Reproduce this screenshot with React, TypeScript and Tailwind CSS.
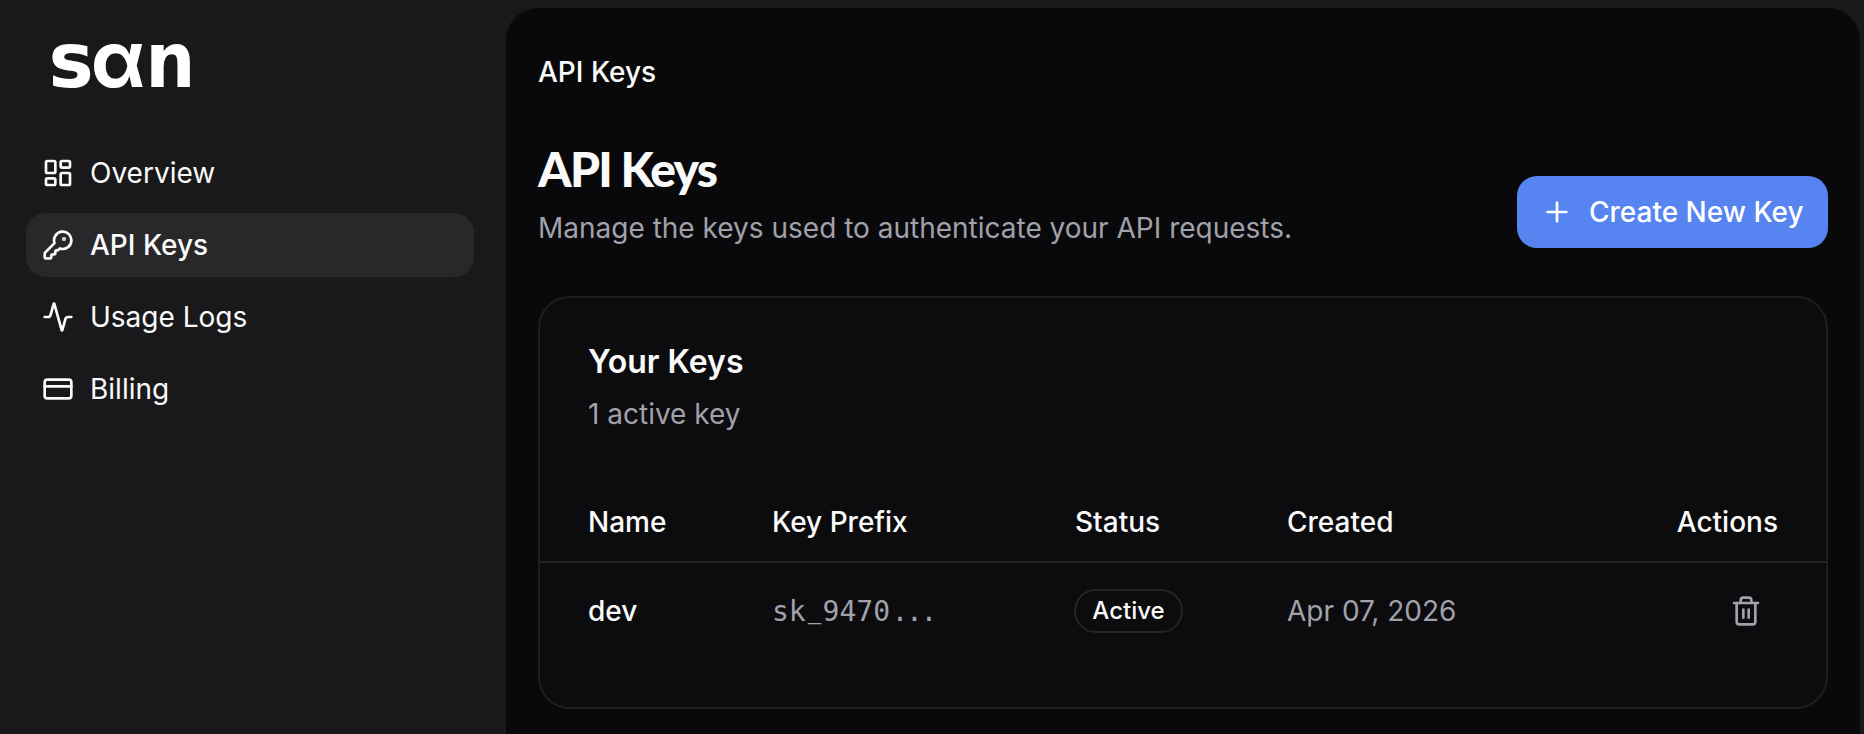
import { Activity, CreditCard, KeyRound, LayoutDashboard, Plus, Trash2 } from "lucide-react";

const navItems = [
  { label: "Overview", icon: LayoutDashboard },
  { label: "API Keys", icon: KeyRound, active: true },
  { label: "Usage Logs", icon: Activity },
  { label: "Billing", icon: CreditCard },
];

const keys = [{ name: "dev", prefix: "9470", status: "Active", created: "Apr 07, 2026" }];

function Logo() {
  return (
    <div className="flex pl-[26px] font-['DejaVu_Sans',sans-serif] text-[76px] leading-[112px] font-bold text-white">
      <span className="flex w-[38px] translate-y-px justify-center">s</span>
      <span className="ml-px flex w-[54px] -translate-y-px justify-center font-['Inter',sans-serif] text-[78px]">α</span>
      <span className="ml-1.5 flex w-[39px] translate-y-px scale-x-[0.92] justify-center">n</span>
    </div>
  );
}

function Sidebar() {
  return (
    <aside className="w-[506px] shrink-0 pr-8 pl-[26px]">
      <div className="h-[141px] pt-1">
        <Logo />
      </div>
      <nav aria-label="Main navigation" className="flex flex-col gap-2">
        {navItems.map(({ label, icon: Icon, active }) => (
          <a
            key={label}
            href="#"
            className={`flex h-16 items-center gap-4 rounded-[20px] px-4 text-[28px] ${
              active ? "bg-[#28282a] font-medium" : ""
            }`}
          >
            <Icon size={32} />
            <span>{label}</span>
          </a>
        ))}
      </nav>
    </aside>
  );
}

function KeysTable() {
  return (
    <div className="mt-12">
      {/* Table head */}
      <div className="grid h-[81px] grid-cols-[184px_303px_212px_1fr] items-center border-b-2 border-[#252527] px-12 font-medium">
        <span>Name</span>
        <span>Key Prefix</span>
        <span>Status</span>
        <span className="flex justify-between">
          <span>Created</span>
          <span>Actions</span>
        </span>
      </div>

      {keys.map((k) => (
        <div key={k.name} className="grid h-24 grid-cols-[184px_303px_212px_1fr] items-center px-12">
          <span className="font-medium">{k.name}</span>
          <span className="pt-px font-['DejaVu_Sans_Mono',monospace] text-[28px] text-[#a1a1aa]">
            sk
            <span className="inline-block -translate-y-1 scale-x-80">_</span>
            {k.prefix}
            <span className="ml-[1.5px] tracking-[-2.4px]">...</span>
          </span>
          <span>
            <span className="-ml-px flex h-11 w-[109px] items-center justify-center rounded-full border-2 border-[#252527] text-2xl font-medium">
              {k.status}
            </span>
          </span>
          <span className="flex items-center justify-between text-[#a1a1aa]">
            <span>{k.created}</span>
            <button aria-label="Delete key" className="flex size-16 items-center justify-center">
              <Trash2 size={32} />
            </button>
          </span>
        </div>
      ))}
    </div>
  );
}

export default function App() {
  return (
    <div className="flex h-[734px] overflow-hidden bg-[#19191b] font-['Inter',sans-serif] text-[28px] leading-10 text-[#fafafa]">
      <Sidebar />

      <main className="mt-2 mr-1 min-w-0 flex-1 rounded-t-[32px] bg-[#09090b] px-8">
        <header className="flex h-32 items-center font-medium">API Keys</header>

        <div className="flex items-end justify-between">
          <div>
            <h1 className="mb-1.5 font-['Lato',sans-serif] text-[48px] leading-[66px] font-black tracking-[-1.8px]">
              API Keys
            </h1>
            <p className="text-[#a1a1aa]">Manage the keys used to authenticate your API requests.</p>
          </div>
          <button className="flex h-[72px] w-[311px] items-center gap-4 rounded-[20px] bg-[#5684f0] pl-6 font-medium text-white">
            <Plus size={32} />
            Create New Key
          </button>
        </div>

        <section className="mt-12 h-[413px] rounded-[32px] border-2 border-[#1e1e20] bg-[#0c0c0e]">
          <div className="px-12 pt-[42px]">
            <h2 className="text-[32px] leading-[44px] font-semibold">Your Keys</h2>
            <p className="mt-2.5 text-[#a1a1aa]">1 active key</p>
          </div>
          <KeysTable />
        </section>
      </main>
    </div>
  );
}
